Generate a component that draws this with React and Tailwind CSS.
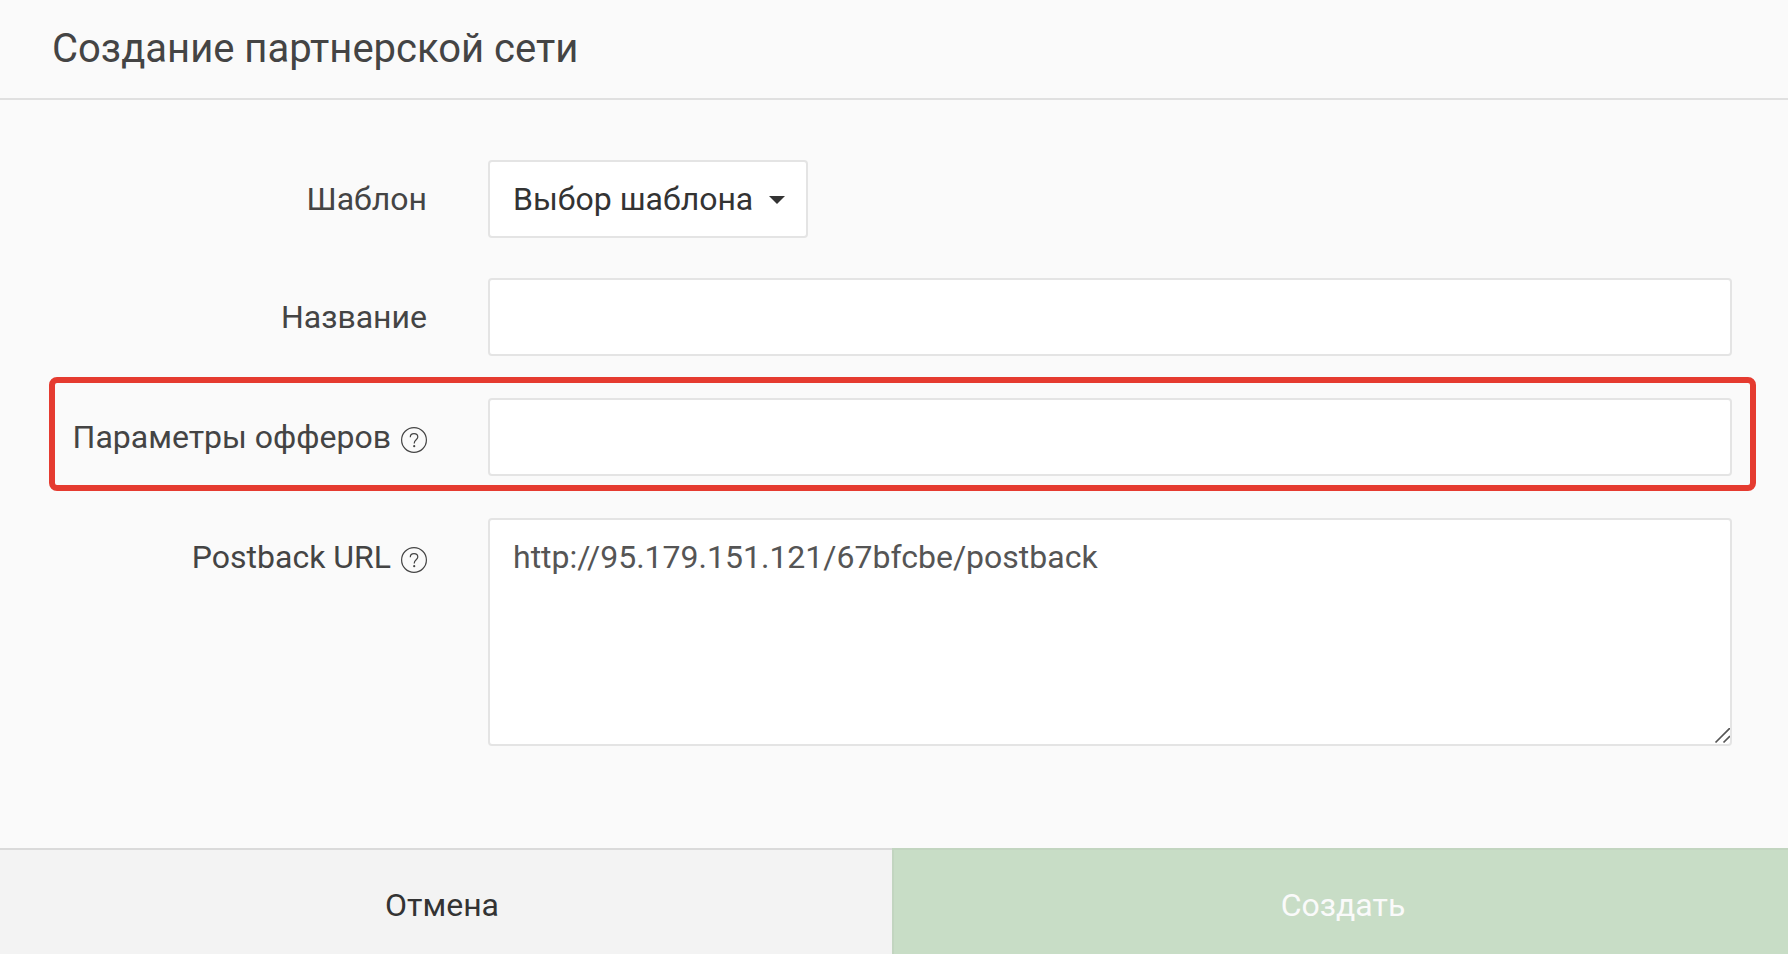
import React, { useState } from 'react';

const fieldClass =
  'w-full rounded-[4px] border-2 border-[#e4e4e4] bg-white px-[23px] text-[32px] leading-[38px] text-[#555] outline-none focus:border-[#c5c5c5]';

function HelpIcon({ title }) {
  return (
    <button type="button" aria-label={title} className="ml-[10px] inline-block size-[26px] align-[-5px] text-[#444]">
      <svg viewBox="0 0 26 26" className="block size-[26px]" fill="none" stroke="currentColor">
        <circle cx="13" cy="13" r="12.4" strokeWidth="1.2" />
        <path d="M9.3 10.2C9.3 7.9 10.9 6.6 13 6.6C15.2 6.6 16.8 7.9 16.8 10C16.8 12.8 13.2 12.9 13.2 16.4" strokeWidth="1.2" />
        <circle cx="13.2" cy="19.2" r="1.1" fill="currentColor" stroke="none" />
      </svg>
    </button>
  );
}

function FormRow({ id, label, help, highlighted, children }) {
  return (
    <div className="relative flex items-start gap-[61px]">
      <div className="w-[371px] shrink-0 whitespace-nowrap py-5 text-right text-[32px] leading-[38px] text-[#444]">
        <label htmlFor={id}>{label}</label>
        {help && <HelpIcon title={help} />}
      </div>
      <div className="min-w-0 flex-1">{children}</div>
      {highlighted && (
        <div className="pointer-events-none absolute -bottom-[15px] -left-[7px] -right-6 -top-[21px] rounded-lg border-6 border-[#e53b30]" />
      )}
    </div>
  );
}

export default function App() {
  const [name, setName] = useState('');
  const [params, setParams] = useState('');
  const [postback, setPostback] = useState('http://95.179.151.121/67bfcbe/postback');

  return (
    <form
      onSubmit={e => e.preventDefault()}
      className="flex min-h-screen flex-col bg-[#fafafa] font-[Roboto,sans-serif]"
    >
      {/* Header */}
      <header className="border-b-2 border-[#e0e0e0] px-[52px] py-[25px]">
        <h1 className="text-[40px] leading-[48px] text-[#444]">Создание партнерской сети</h1>
      </header>

      {/* Fields */}
      <main className="flex flex-1 flex-col gap-[42px] px-14 pb-[102px] pt-[60px]">
        <div className="flex flex-col gap-10">
          <FormRow id="template" label="Шаблон">
            <div className="relative w-80">
              <select
                id="template"
                className="h-[78px] w-full cursor-pointer appearance-none rounded-[4px] border-2 border-[#e4e4e4] bg-white pl-[23px] text-[32px] leading-[38px] text-[#333] outline-none"
              >
                <option>Выбор шаблона</option>
              </select>
              <svg viewBox="0 0 16 8" className="pointer-events-none absolute right-[23px] top-9 h-2 w-4 text-[#333]">
                <path d="M0 0H16L8 8Z" fill="currentColor" />
              </svg>
            </div>
          </FormRow>

          <FormRow id="name" label="Название">
            <input
              id="name"
              type="text"
              value={name}
              onChange={e => setName(e.target.value)}
              className={`${fieldClass} block h-[78px]`}
            />
          </FormRow>
        </div>

        <FormRow id="params" label="Параметры офферов" help="Справка: параметры офферов" highlighted>
          <input
            id="params"
            type="text"
            value={params}
            onChange={e => setParams(e.target.value)}
            className={`${fieldClass} block h-[78px]`}
          />
        </FormRow>

        <FormRow id="postback" label="Postback URL" help="Справка: Postback URL">
          <div className="relative">
            <textarea
              id="postback"
              value={postback}
              onChange={e => setPostback(e.target.value)}
              className={`${fieldClass} block h-[228px] resize-none py-[18px]`}
            />
            <svg
              viewBox="0 0 16 16"
              className="pointer-events-none absolute bottom-[2px] right-[2px] size-4"
              fill="none"
              stroke="#555"
              strokeWidth="1.7"
            >
              <path d="M1.5 14.5L16 0M9.5 14.5L16 8" />
            </svg>
          </div>
        </FormRow>
      </main>

      {/* Footer */}
      <footer className="flex h-[106px] text-[32px] leading-[38px]">
        <button type="button" className="w-[calc(50%-2px)] border-t-2 border-[#dadada] bg-[#f3f3f3] pr-2 pt-1.5 text-[#333]">
          Отмена
        </button>
        <button type="submit" className="flex-1 border-l-2 border-t-2 border-[#c2d5c0] bg-[#c8ddc6] pl-1 pt-1.5 text-[#fafafa]">
          Создать
        </button>
      </footer>
    </form>
  );
}
